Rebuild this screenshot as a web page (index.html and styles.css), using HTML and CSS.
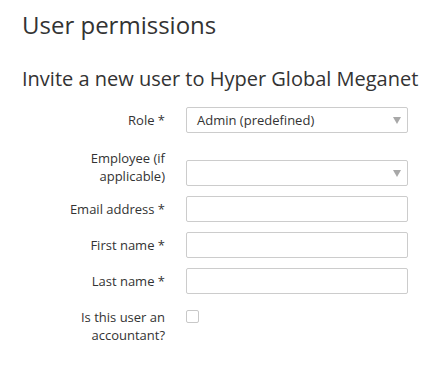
FILE: index.html
```html
<!DOCTYPE html>
<html>
<head>
<meta charset="utf-8">
<link rel="stylesheet" href="styles.css">
</head>
<body>
<div class="page">
  <h1 class="title">User permissions</h1>
  <h2 class="subtitle">Invite a new user to Hyper Global Meganet</h2>
  <form class="form">
    <div class="row">
      <label class="label">Role *</label>
      <div class="field select"><span class="value">Admin (predefined)</span><span class="arrow"></span></div>
    </div>
    <div class="row row-employee">
      <label class="label">Employee (if applicable)</label>
      <div class="field select field-end"><span class="value"></span><span class="arrow"></span></div>
    </div>
    <div class="row row-email">
      <label class="label">Email address *</label>
      <div class="field"></div>
    </div>
    <div class="row">
      <label class="label">First name *</label>
      <div class="field"></div>
    </div>
    <div class="row">
      <label class="label">Last name *</label>
      <div class="field"></div>
    </div>
    <div class="row row-check">
      <label class="label">Is this user an accountant?</label>
      <div class="check-wrap"><span class="checkbox"></span></div>
    </div>
  </form>
</div>
</body>
</html>
```
FILE: styles.css
```css
html, body {
  margin: 0;
  padding: 0;
  background: #fff;
}
.page {
  padding: 0 0 0 22px;
  font-family: "Open Sans", "Liberation Sans", sans-serif;
  color: #333;
}
.title {
  margin: 0;
  padding-top: 9px;
  font-size: 24px;
  font-weight: 400;
  line-height: 31px;
  color: #333;
}
.subtitle {
  margin: 0;
  padding-top: 25px;
  font-size: 20px;
  font-weight: 400;
  line-height: 27px;
  color: #333;
}
.form {
  display: flex;
  flex-direction: column;
  gap: 10px;
  margin-top: 15px;
}
.row {
  display: grid;
  grid-template-columns: 100px 222px;
  column-gap: 21px;
  padding-left: 43px;
  align-items: center;
}
.label {
  text-align: right;
  font-size: 13px;
  line-height: 18px;
  color: #333;
}
.field {
  box-sizing: border-box;
  height: 26px;
  border: 1px solid #ccc;
  border-radius: 2px;
  background: #fff;
  display: flex;
  align-items: center;
  padding: 0 6px 0 10px;
  font-size: 13px;
  color: #333;
}
.select .value {
  flex: 1;
}
.arrow {
  width: 0;
  height: 0;
  border-left: 4px solid transparent;
  border-right: 4px solid transparent;
  border-top: 7px solid #a8a8a8;
}
.row-employee {
  align-items: end;
  margin-top: 6px;
}
.field-end {
  margin-bottom: -1px;
}
.row-email {
  margin-top: 1px;
}
.row-check {
  align-items: start;
  margin-top: 4px;
}
.check-wrap {
  padding-top: 2px;
}
.checkbox {
  display: block;
  box-sizing: border-box;
  width: 13px;
  height: 13px;
  border: 1px solid #c8c8c8;
  border-radius: 2px;
  background: #fff;
}
```
